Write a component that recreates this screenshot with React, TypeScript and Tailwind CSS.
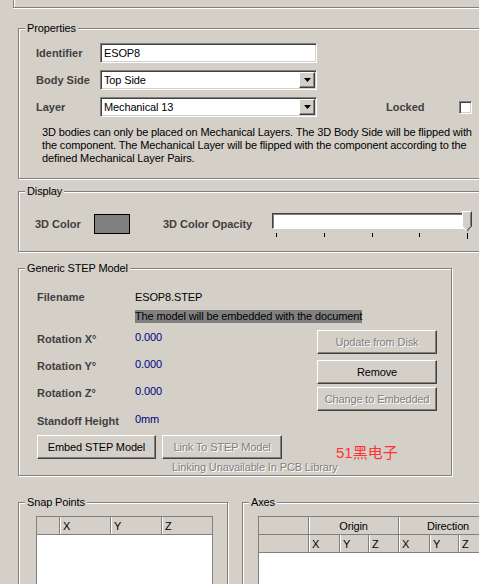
import type { ReactNode } from 'react';

const etched = "border border-[#808080] shadow-[inset_1px_1px_0_#fff,1px_1px_0_#fff]";
const sunken = "border border-t-[#808080] border-l-[#808080] border-b-white border-r-white shadow-[inset_1px_1px_0_#404040,inset_-1px_-1px_0_#d4d0c8] bg-white";
const raised = "border border-t-white border-l-white border-b-[#404040] border-r-[#404040] shadow-[inset_-1px_-1px_0_#808080] bg-[#d4d0c8]";
const label = "font-bold text-[#404040] tracking-normal";
const disabledText = "text-[#808080] [text-shadow:1px_1px_0_#fff]";

function Group({ title, className, children }: { title: string; className: string; children?: ReactNode }) {
  return (
    <fieldset className={`${etched} ${className}`}>
      <legend className="ml-[6px] px-[2px] leading-[14px] bg-[#d4d0c8]">{title}</legend>
      {children}
    </fieldset>
  );
}

function Select({ value }: { value: string }) {
  return (
    <div className={`${sunken} w-[217px] h-[20px] flex items-center justify-between pl-[3px] pr-[1px]`}>
      <span className="leading-[14px]">{value}</span>
      <div className={`${raised} w-[16px] h-[16px] flex items-center justify-center`}>
        <svg width="7" height="4" viewBox="0 0 7 4">
          <path d="M0 0h7L3.5 4z" fill="#000" />
        </svg>
      </div>
    </div>
  );
}

function Button({ text, disabled, className }: { text: string; disabled?: boolean; className: string }) {
  return (
    <div className={`${raised} ${className} flex items-center justify-center leading-[14px] ${disabled ? disabledText : "text-black"}`}>
      {text}
    </div>
  );
}

function HeadCell({ text, className, center }: { text?: string; className: string; center?: boolean }) {
  return (
    <div className={`${className} h-full flex items-center leading-[14px] ${center ? "justify-center" : "pl-[3px]"}`}>
      {text}
    </div>
  );
}

const sep = "border-l border-[#808080] shadow-[inset_1px_0_0_#fff]";

export default function App() {
  return (
    <div className="w-[479px] h-[584px] overflow-hidden bg-[#d4d0c8] font-['Liberation_Sans',Arial,sans-serif] text-[11px] text-black tracking-[-0.13px]">
      <div className="ml-[13px] h-[8px] w-[480px] border-l border-b border-[#808080] shadow-[inset_1px_0_0_#fff,0_1px_0_#fff]" />

      <Group title="Properties" className="ml-[18px] mt-[13px] w-[470px] h-[158px]">
        <div className="flex flex-col gap-[7px] pl-[17px] mt-[8px]">
          <div className="flex items-center h-[20px]">
            <span className={`${label} w-[64px]`}>Identifier</span>
            <div className={`${sunken} w-[217px] h-[20px] flex items-center pl-[3px] leading-[14px]`}>ESOP8</div>
          </div>
          <div className="flex items-center h-[20px]">
            <span className={`${label} w-[64px]`}>Body Side</span>
            <Select value="Top Side" />
          </div>
          <div className="flex items-center h-[20px]">
            <span className={`${label} w-[64px]`}>Layer</span>
            <Select value="Mechanical 13" />
            <span className={`${label} ml-[69px] w-[73px]`}>Locked</span>
            <div className={`${sunken} w-[13px] h-[13px]`} />
          </div>
        </div>
        <p className="mt-[9px] ml-[23px] leading-[13px] whitespace-nowrap">
          3D bodies can only be placed on Mechanical Layers. The 3D Body Side will be flipped with
          <br />
          the component. The Mechanical Layer will be flipped with the component according to the
          <br />
          defined Mechanical Layer Pairs.
        </p>
      </Group>

      <Group title="Display" className="ml-[18px] mt-[5px] w-[470px] h-[68px]">
        <div className="flex items-start pl-[16px] mt-[16px]">
          <span className={`${label} w-[59px] h-[20px] flex items-center`}>3D Color</span>
          <div className="w-[36px] h-[20px] border border-black bg-[#808080]" />
          <span className={`${label} ml-[33px] w-[109px] h-[20px] flex items-center`}>3D Color Opacity</span>
          <div className="relative w-[200px] -mt-[1px]">
            <div className="h-[16px] bg-white border border-t-[#404040] border-l-[#404040] border-b-white border-r-[#d4d0c8] shadow-[inset_1px_1px_0_#808080]" />
            <svg className="absolute right-0 -top-[2px]" width="10" height="21" viewBox="0 0 10 21">
              <path d="M0.5 0.5h9v15l-4.5 5l-4.5-5z" fill="#d4d0c8" stroke="#fff" />
              <path d="M9.5 0.5v15l-4.5 5" fill="none" stroke="#404040" />
              <path d="M8.5 1.5v13.6l-3.5 4" fill="none" stroke="#808080" />
            </svg>
            <svg className="mt-[4px]" width="200" height="6" viewBox="0 0 200 6">
              <g stroke="#000" strokeWidth="1">
                <path d="M4.5 0v4M52.5 0v4M100.5 0v4M147.5 0v4M195.5 0v6" />
              </g>
            </svg>
          </div>
        </div>
      </Group>

      <Group title="Generic STEP Model" className="ml-[18px] mt-[9px] w-[434px] h-[215px]">
        <div className="flex">
          <div className="flex flex-col pl-[18px] w-[298px]">
            <div className="flex items-center h-[14px] mt-[15px]">
              <span className={`${label} w-[98px]`}>Filename</span>
              <span>ESOP8.STEP</span>
            </div>
            <div className="flex mt-[6px]">
              <span className="ml-[98px] bg-[#808080] leading-[13px] whitespace-nowrap">The model will be embedded with the document</span>
            </div>
            <div className="flex items-start mt-[7px]">
              <span className={`${label} w-[98px] mt-[2px] leading-[14px]`}>Rotation X°</span>
              <span className="text-[#000080] leading-[14px]">0.000</span>
            </div>
            <div className="flex items-start mt-[11px]">
              <span className={`${label} w-[98px] mt-[2px] leading-[14px]`}>Rotation Y°</span>
              <span className="text-[#000080] leading-[14px]">0.000</span>
            </div>
            <div className="flex items-start mt-[11px]">
              <span className={`${label} w-[98px] mt-[2px] leading-[14px]`}>Rotation Z°</span>
              <span className="text-[#000080] leading-[14px]">0.000</span>
            </div>
            <div className="flex items-start mt-[12px]">
              <span className={`${label} w-[98px] mt-[2px] leading-[14px]`}>Standoff Height</span>
              <span className="text-[#000080] leading-[14px]">0mm</span>
            </div>
          </div>
          <div className="flex flex-col mt-[55px]">
            <Button text="Update from Disk" disabled className="w-[120px] h-[24px]" />
            <Button text="Remove" className="w-[120px] h-[24px] mt-[6px]" />
            <Button text="Change to Embedded" disabled className="w-[120px] h-[24px] mt-[3px]" />
          </div>
        </div>
        <div className="flex items-start pl-[18px] mt-[7px]">
          <Button text="Embed STEP Model" className="w-[119px] h-[24px]" />
          <Button text="Link To STEP Model" disabled className="w-[120px] h-[24px] ml-[6px]" />
          <span className="ml-[54px] mt-[9px] -mb-[4px] text-[15px] leading-[17px] tracking-normal text-[#ff3333] font-['Liberation_Sans','Noto_Sans_CJK_SC',sans-serif]">51黑电子</span>
        </div>
        <div className={`ml-[153px] mt-[1px] leading-[14px] ${disabledText}`}>Linking Unavailable In PCB Library</div>
      </Group>

      <div className="flex items-start mt-[19px]">
        <Group title="Snap Points" className="shrink-0 ml-[18px] w-[210px] h-[100px]">
          <div className="ml-[17px] mt-[7px] w-[177px] h-[80px] border border-[#808080] bg-white">
            <div className="flex h-[18px] bg-[#d4d0c8] border-b border-[#808080]">
              <HeadCell className="w-[22px]" />
              <HeadCell text="X" className={`w-[51px] ${sep}`} />
              <HeadCell text="Y" className={`w-[51px] ${sep}`} />
              <HeadCell text="Z" className={`flex-1 ${sep}`} />
            </div>
          </div>
        </Group>

        <Group title="Axes" className="shrink-0 ml-[14px] w-[260px] h-[100px]">
          <div className="ml-[15px] mt-[7px] w-[240px] h-[80px] border border-[#808080] bg-white">
            <div className="flex h-[18px] bg-[#d4d0c8] border-b border-[#808080]">
              <HeadCell className="w-[49px]" />
              <HeadCell text="Origin" center className={`w-[90px] ${sep}`} />
              <HeadCell text="Direction" center className={`flex-1 ${sep}`} />
            </div>
            <div className="flex h-[18px] bg-[#d4d0c8] border-b border-[#808080]">
              <HeadCell className="w-[49px]" />
              <HeadCell text="X" className={`w-[31px] ${sep}`} />
              <HeadCell text="Y" className={`w-[29px] ${sep}`} />
              <HeadCell text="Z" className={`w-[30px] ${sep}`} />
              <HeadCell text="X" className={`w-[31px] ${sep}`} />
              <HeadCell text="Y" className={`w-[29px] ${sep}`} />
              <HeadCell text="Z" className={`flex-1 ${sep}`} />
            </div>
          </div>
        </Group>
      </div>
    </div>
  );
}
